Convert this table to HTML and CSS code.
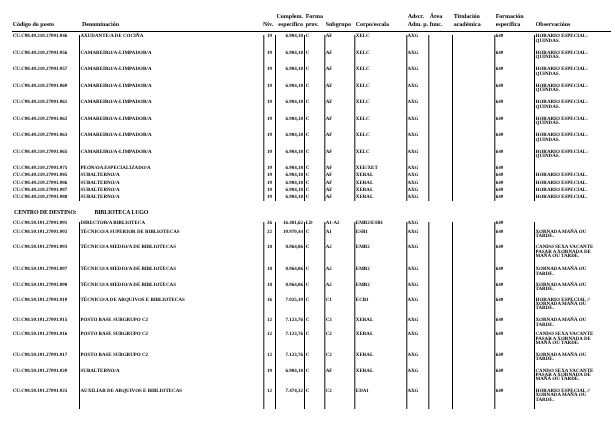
FILE: index.html
```html
<!DOCTYPE html>
<html lang="gl">
<head>
<meta charset="utf-8">
<title>Relación de postos</title>
<link rel="stylesheet" href="styles.css">
</head>
<body>
<div class="page">
  <div class="head">
    <div class="hc-code">Código do posto</div>
    <div class="hc-den">Denominación</div>
    <div class="hc-niv">Nív.</div>
    <div class="hc-compl">Complem.<br>específico</div>
    <div class="hc-pad">Forma<br>prov.</div>
    <div class="hc-pad">Subgrupo</div>
    <div class="hc-pad">Corpo/escala</div>
    <div class="hc-pad">Adscr.<br>Adm. p.</div>
    <div class="hc-pad">Área<br>func.</div>
    <div class="hc-pad">Titulación<br>académica</div>
    <div class="hc-pad">Formación<br>específica</div>
    <div class="hc-pad">Observacións</div>
  </div>

  <div class="sect s1">
    <div class="row tall"><div>CU.C98.40.210.27001.046</div><div>AXUDANTE/A DE COCIÑA</div><div>10</div><div>6.984,18</div><div>C</div><div>AF</div><div>XELC</div><div>AXG</div><div></div><div></div><div>640</div><div>HORARIO ESPECIAL:<br>QUINDAS.</div></div>
    <div class="row tall"><div>CU.C98.40.210.27001.056</div><div>CAMAREIRO/A-LIMPADOR/A</div><div>10</div><div>6.984,18</div><div>C</div><div>AF</div><div>XELC</div><div>AXG</div><div></div><div></div><div>640</div><div>HORARIO ESPECIAL:<br>QUINDAS.</div></div>
    <div class="row tall"><div>CU.C98.40.210.27001.057</div><div>CAMAREIRO/A-LIMPADOR/A</div><div>10</div><div>6.984,18</div><div>C</div><div>AF</div><div>XELC</div><div>AXG</div><div></div><div></div><div>640</div><div>HORARIO ESPECIAL:<br>QUINDAS.</div></div>
    <div class="row tall"><div>CU.C98.40.210.27001.060</div><div>CAMAREIRO/A-LIMPADOR/A</div><div>10</div><div>6.984,18</div><div>C</div><div>AF</div><div>XELC</div><div>AXG</div><div></div><div></div><div>640</div><div>HORARIO ESPECIAL:<br>QUINDAS.</div></div>
    <div class="row tall"><div>CU.C98.40.210.27001.061</div><div>CAMAREIRO/A-LIMPADOR/A</div><div>10</div><div>6.984,18</div><div>C</div><div>AF</div><div>XELC</div><div>AXG</div><div></div><div></div><div>640</div><div>HORARIO ESPECIAL:<br>QUINDAS.</div></div>
    <div class="row tall"><div>CU.C98.40.210.27001.062</div><div>CAMAREIRO/A-LIMPADOR/A</div><div>10</div><div>6.984,18</div><div>C</div><div>AF</div><div>XELC</div><div>AXG</div><div></div><div></div><div>640</div><div>HORARIO ESPECIAL:<br>QUINDAS.</div></div>
    <div class="row tall"><div>CU.C98.40.210.27001.063</div><div>CAMAREIRO/A-LIMPADOR/A</div><div>10</div><div>6.984,18</div><div>C</div><div>AF</div><div>XELC</div><div>AXG</div><div></div><div></div><div>640</div><div>HORARIO ESPECIAL:<br>QUINDAS.</div></div>
    <div class="row tall"><div>CU.C98.40.210.27001.065</div><div>CAMAREIRO/A-LIMPADOR/A</div><div>10</div><div>6.984,18</div><div>C</div><div>AF</div><div>XELC</div><div>AXG</div><div></div><div></div><div>640</div><div>HORARIO ESPECIAL:<br>QUINDAS.</div></div>
    <div class="row short"><div>CU.C98.40.210.27001.075</div><div>PEÓN/OA ESPECIALIZADO/A</div><div>10</div><div>6.984,18</div><div>C</div><div>AF</div><div>XEE/XET</div><div>AXG</div><div></div><div></div><div>640</div><div></div></div>
    <div class="row short"><div>CU.C98.40.210.27001.085</div><div>SUBALTERNO/A</div><div>10</div><div>6.984,18</div><div>C</div><div>AF</div><div>XERAL</div><div>AXG</div><div></div><div></div><div>640</div><div>HORARIO ESPECIAL.</div></div>
    <div class="row short"><div>CU.C98.40.210.27001.086</div><div>SUBALTERNO/A</div><div>10</div><div>6.984,18</div><div>C</div><div>AF</div><div>XERAL</div><div>AXG</div><div></div><div></div><div>640</div><div>HORARIO ESPECIAL.</div></div>
    <div class="row short"><div>CU.C98.40.210.27001.087</div><div>SUBALTERNO/A</div><div>10</div><div>6.984,18</div><div>C</div><div>AF</div><div>XERAL</div><div>AXG</div><div></div><div></div><div>640</div><div>HORARIO ESPECIAL.</div></div>
    <div class="row last"><div>CU.C98.40.210.27001.088</div><div>SUBALTERNO/A</div><div>10</div><div>6.984,18</div><div>C</div><div>AF</div><div>XERAL</div><div>AXG</div><div></div><div></div><div>640</div><div>HORARIO ESPECIAL.</div></div>
  </div>

  <div class="centro"><span>CENTRO DE DESTINO:</span><span class="centro-name">BIBLIOTECA LUGO</span></div>

  <div class="sect s2">
    <div class="row h9"><div>CU.C98.50.101.27001.001</div><div>DIRECTOR/A BIBLIOTECA</div><div>26</div><div>16.481,62</div><div>LD</div><div>A1-A2</div><div>EMB2/ESB1</div><div>AXG</div><div></div><div></div><div>640</div><div></div></div>
    <div class="row h157"><div>CU.C98.50.101.27001.002</div><div>TÉCNICO/A SUPERIOR DE BIBLIOTECAS</div><div>22</div><div>10.970,44</div><div>C</div><div>A1</div><div>ESB1</div><div>AXG</div><div></div><div></div><div>640</div><div>XORNADA MAÑÁ OU<br>TARDE.</div></div>
    <div class="row h22"><div>CU.C98.50.101.27001.003</div><div>TÉCNICO/A MEDIO/A DE BIBLIOTECAS</div><div>18</div><div>8.064,86</div><div>C</div><div>A2</div><div>EMB2</div><div>AXG</div><div></div><div></div><div>640</div><div>CANDO SEXA VACANTE<br>PASAR A XORNADA DE<br>MAÑÁ OU TARDE.</div></div>
    <div class="row h153"><div>CU.C98.50.101.27001.007</div><div>TÉCNICO/A MEDIO/A DE BIBLIOTECAS</div><div>18</div><div>8.064,86</div><div>C</div><div>A2</div><div>EMB2</div><div>AXG</div><div></div><div></div><div>640</div><div>XORNADA MAÑÁ OU<br>TARDE.</div></div>
    <div class="row h15"><div>CU.C98.50.101.27001.008</div><div>TÉCNICO/A MEDIO/A DE BIBLIOTECAS</div><div>18</div><div>8.064,86</div><div>C</div><div>A2</div><div>EMB2</div><div>AXG</div><div></div><div></div><div>640</div><div>XORNADA MAÑÁ OU<br>TARDE.</div></div>
    <div class="row h207"><div>CU.C98.50.101.27001.010</div><div>TÉCNICO/A DE ARQUIVOS E BIBLIOTECAS</div><div>16</div><div>7.025,10</div><div>C</div><div>C1</div><div>ECB1</div><div>AXG</div><div></div><div></div><div>640</div><div>HORARIO ESPECIAL //<br>XORNADA MAÑÁ OU<br>TARDE.</div></div>
    <div class="row h14"><div>CU.C98.50.101.27001.015</div><div>POSTO BASE SUBGRUPO C2</div><div>12</div><div>7.123,76</div><div>C</div><div>C2</div><div>XERAL</div><div>AXG</div><div></div><div></div><div>640</div><div>XORNADA MAÑÁ OU<br>TARDE.</div></div>
    <div class="row h207"><div>CU.C98.50.101.27001.016</div><div>POSTO BASE SUBGRUPO C2</div><div>12</div><div>7.123,76</div><div>C</div><div>C2</div><div>XERAL</div><div>AXG</div><div></div><div></div><div>640</div><div>CANDO SEXA VACANTE<br>PASAR A XORNADA DE<br>MAÑÁ OU TARDE.</div></div>
    <div class="row h156"><div>CU.C98.50.101.27001.017</div><div>POSTO BASE SUBGRUPO C2</div><div>12</div><div>7.123,76</div><div>C</div><div>C2</div><div>XERAL</div><div>AXG</div><div></div><div></div><div>640</div><div>XORNADA MAÑÁ OU<br>TARDE.</div></div>
    <div class="row h204"><div>CU.C98.50.101.27001.020</div><div>SUBALTERNO/A</div><div>10</div><div>6.984,18</div><div>C</div><div>AF</div><div>XERAL</div><div>AXG</div><div></div><div></div><div>640</div><div>CANDO SEXA VACANTE<br>PASAR A XORNADA DE<br>MAÑÁ OU TARDE.</div></div>
    <div class="row h195"><div>CU.C98.50.101.27001.025</div><div>AUXILIAR DE ARQUIVOS E BIBLIOTECAS</div><div>12</div><div>7.474,32</div><div>C</div><div>C2</div><div>EDA1</div><div>AXG</div><div></div><div></div><div>640</div><div>HORARIO ESPECIAL //<br>XORNADA MAÑÁ OU<br>TARDE.</div></div>
  </div>
</div>
</body>
</html>
```

FILE: styles.css
```css
* {
  box-sizing: border-box;
  margin: 0;
  padding: 0;
}

html, body {
  background: #fff;
}

body {
  margin: 0;
  width: 615px;
  height: 439px;
  overflow: hidden;
  color: #000;
  font-family: "Liberation Serif", "Times New Roman", serif;
  font-weight: bold;
  text-rendering: geometricPrecision;
}

.page {
  padding: 13px 4px 0 12px;
  height: 439px;
  will-change: transform;
}

/* shared column layout for header and rows */
.head,
.row {
  display: grid;
  grid-template-columns: 67px 184px 12px 29px 20px 30px 52px 22px 24px 42px 40px 1fr;
  white-space: nowrap;
}

/* header */
.head {
  align-items: end;
  font-size: 6px;
  line-height: 8px;
  padding-bottom: 1.5px;
  border-bottom: 1px solid #000;
}

.hc-code { padding-left: 0.7px; }
.hc-den { padding-left: 3px; }
.hc-niv { padding-left: 0; }
.hc-compl { text-align: right; padding-right: 1px; }
.hc-pad { padding-left: 1.7px; }

/* table sections */
.sect {
  font-size: 5px;
  line-height: 4.33px;
}

.s1 {
  margin-top: 3.8px;
}

.s2 {
  margin-top: 5.1px;
}

/* column text placement */
.row > div:nth-child(1) { padding-left: 0.7px; }
.row > div:nth-child(2) { padding-left: 1.5px; }
.row > div:nth-child(3) { text-align: center; padding-left: 1px; }
.row > div:nth-child(4) { text-align: right; padding-right: 1px; }
.row > div:nth-child(5) { padding-left: 1.7px; }
.row > div:nth-child(6) { padding-left: 1.7px; }
.row > div:nth-child(7) { padding-left: 1.8px; }
.row > div:nth-child(8) { padding-left: 1.4px; }
.row > div:nth-child(11) { padding-left: 1.8px; }
.row > div:nth-child(12) { padding-left: 1.5px; }

/* vertical rules: black and grey */
.row > div:nth-child(2),
.row > div:nth-child(4),
.row > div:nth-child(5),
.row > div:nth-child(10),
.row > div:nth-child(12) {
  box-shadow: inset 1px 0 0 #000;
}

.row > div:nth-child(3),
.row > div:nth-child(6),
.row > div:nth-child(7),
.row > div:nth-child(8),
.row > div:nth-child(9),
.row > div:nth-child(11) {
  box-shadow: inset 1px 0 0 #555, inset 2px 0 0 #b5b5b5;
}

/* row heights */
.tall { height: 16.5px; }
.short { height: 7.2px; }
.last { height: 5px; }
.h9 { height: 9px; }
.h14 { height: 14px; }
.h15 { height: 15px; }
.h153 { height: 15.3px; }
.h156 { height: 15.6px; }
.h157 { height: 15.7px; }
.h195 { height: 19.5px; }
.h204 { height: 20.4px; }
.h207 { height: 20.7px; }
.h22 { height: 22px; }

/* section heading */
.centro {
  margin-top: 7.5px;
  padding-left: 2px;
  height: 8px;
  font-size: 6px;
  line-height: 8px;
  letter-spacing: -0.2px;
  white-space: nowrap;
}

.centro-name {
  margin-left: 18px;
}
```
